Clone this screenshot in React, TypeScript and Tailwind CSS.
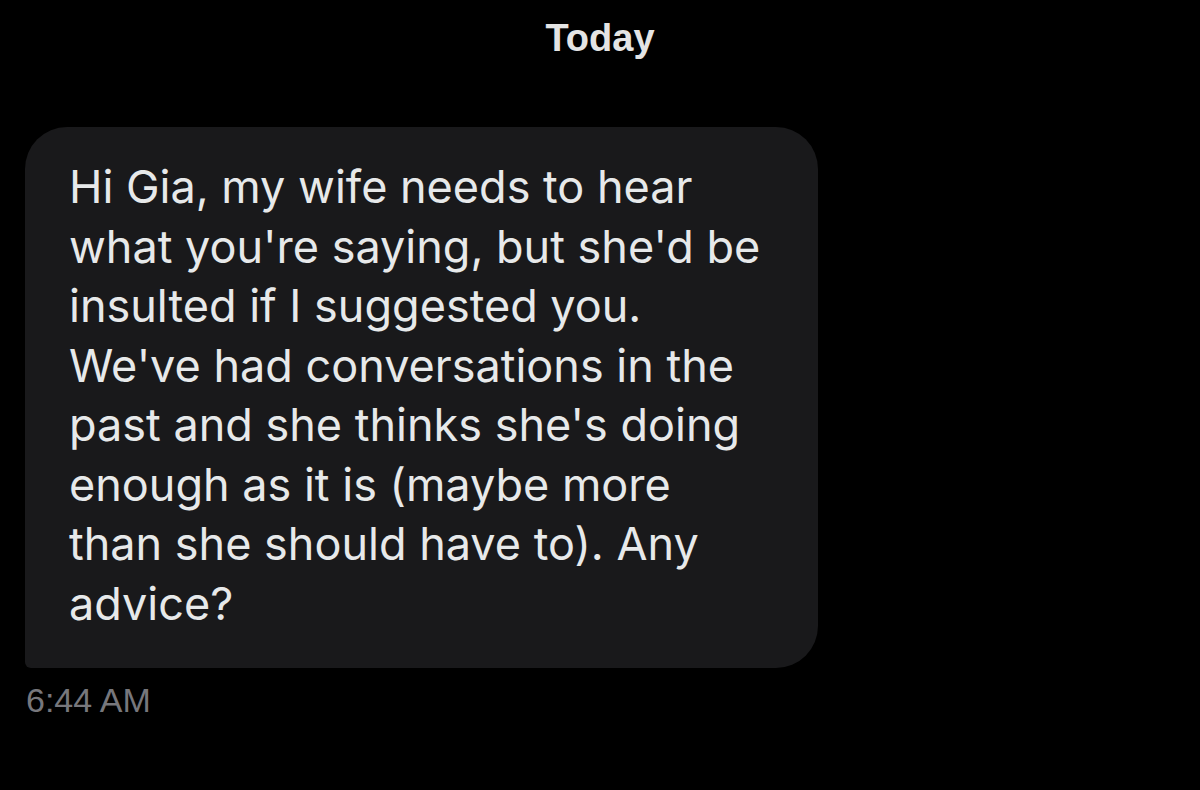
const lines = [
  "Hi Gia, my wife needs to hear",
  "what you're saying, but she'd be",
  "insulted if I suggested you.",
  "We've had conversations in the",
  "past and she thinks she's doing",
  "enough as it is (maybe more",
  "than she should have to). Any",
  "advice?",
];

export default function App() {
  return (
    <div className="min-h-[790px] w-[1200px] bg-black font-['Inter',sans-serif]">
      <div className="pt-[13px] text-center font-['Liberation_Sans',Arial,sans-serif] text-[38px] font-bold leading-[50px] text-[#e4e4e4]">
        Today
      </div>

      <div className="mt-[64px] ml-[25px] w-[793px] h-[541px] rounded-[42px] rounded-bl-[6px] bg-[#19191b] pl-[44px] pt-[30px]">
        {lines.map((line) => (
          <div
            key={line}
            className="whitespace-nowrap text-[45px] leading-[59.5px] text-[#e7e9ea]"
          >
            {line}
          </div>
        ))}
      </div>

      <div className="ml-[26px] mt-[12px] font-['Liberation_Sans',Arial,sans-serif] text-[34px] leading-[40px] text-[#77777c]">
        6:44 AM
      </div>
    </div>
  );
}
